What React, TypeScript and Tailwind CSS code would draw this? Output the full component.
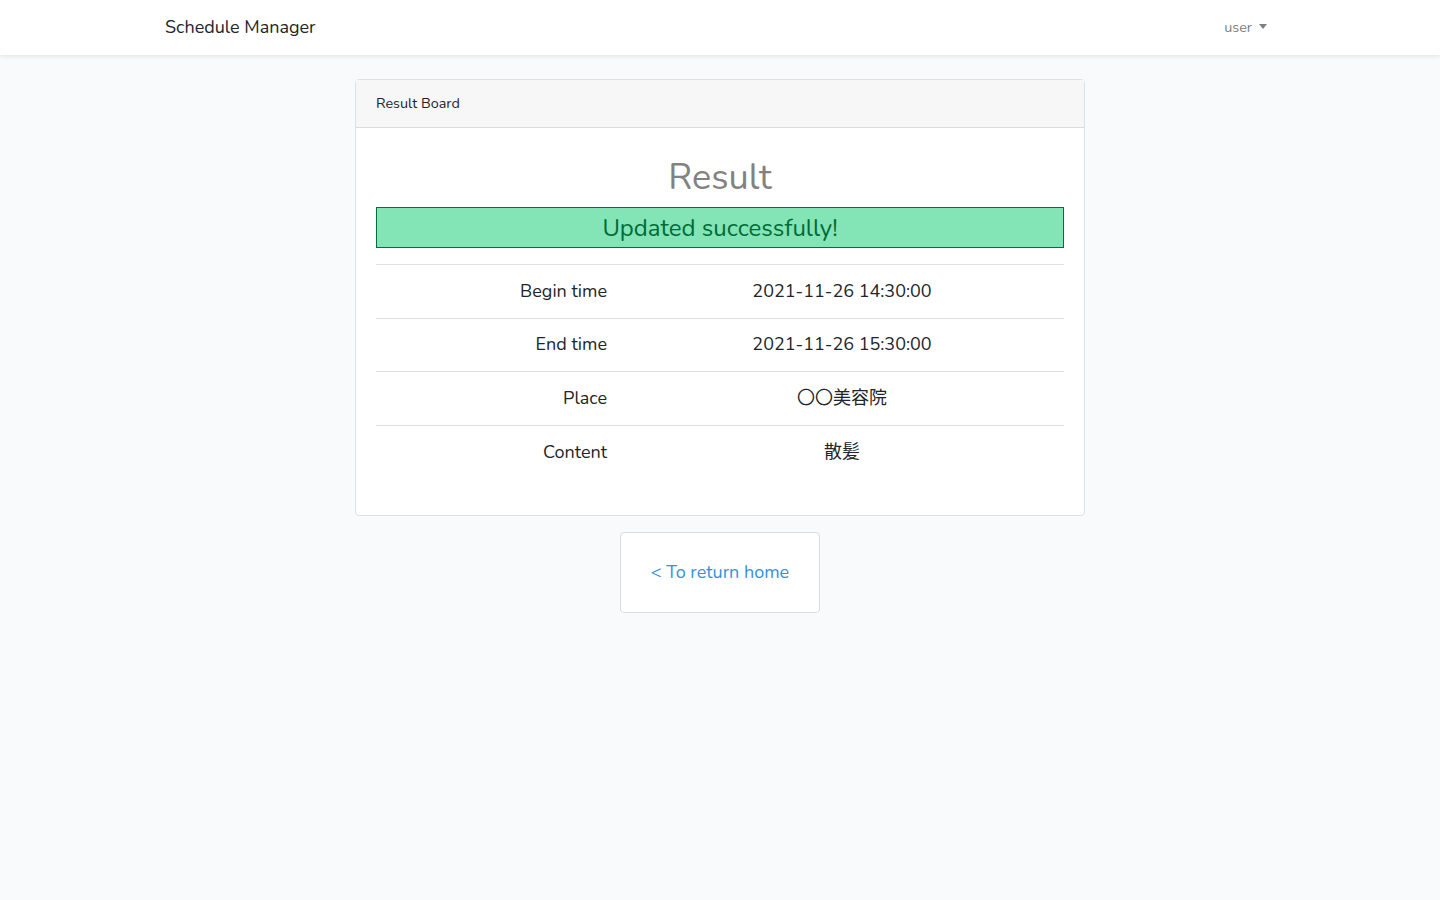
const rows = [
  { label: "Begin time", value: "2021-11-26 14:30:00" },
  { label: "End time", value: "2021-11-26 15:30:00" },
  { label: "Place", value: "〇〇美容院" },
  { label: "Content", value: "散髪" },
];

const font = `font-['Nunito','Open_Sans','Noto_Sans_CJK_JP',sans-serif]`;

export default function App() {
  return (
    <div className={`min-h-[900px] bg-[#f8fafc] text-[#212529] ${font}`}>
      <nav className="h-[55px] bg-white shadow-[0_2px_4px_rgba(0,0,0,0.075)]">
        <div className="mx-auto flex h-full w-[1140px] items-center justify-between px-[15px]">
          <span className="text-[18px] text-[#212529]">Schedule Manager</span>
          <span className="mr-[8px] flex items-center gap-[7px] text-[14.4px] text-[#808080]">
            user
            <span className="mb-[1px] h-0 w-0 border-x-[4.5px] border-t-[5px] border-x-transparent border-t-[#808080]" />
          </span>
        </div>
      </nav>

      <main className="flex flex-col items-center pt-[24px]">
        <div className="w-[730px] rounded-[4px] border border-[#e0e0e0] bg-white">
          <div className="h-[48px] border-b border-[#dcdcdc] bg-[#f7f7f7] px-[20px] flex items-center text-[14.4px]">
            Result Board
          </div>
          <div className="px-[20px] pt-[28px] pb-[36px]">
            <h1 className="text-center text-[36px] leading-[43px] text-[#828282]">Result</h1>
            <div className="mt-[8px] flex h-[41px] items-center justify-center border border-[#00713c] bg-[#83e4b5] text-[24px] text-[#006b38]">
              Updated successfully!
            </div>
            <table className="mt-[16px] w-full text-[18px]">
              <tbody>
                {rows.map((r) => (
                  <tr key={r.label} className="h-[53.5px] border-t border-[#dee2e6]">
                    <td className="w-[244px] pr-[13px] text-right">{r.label}</td>
                    <td className="text-center">{r.value}</td>
                  </tr>
                ))}
              </tbody>
            </table>
          </div>
        </div>

        <a
          href="#"
          className="mt-[16px] flex h-[81px] w-[200px] items-center justify-center rounded-[4px] border border-[#dcdcdc] bg-white text-[18px] text-[#3490dc]"
        >
          &lt; To return home
        </a>
      </main>
    </div>
  );
}
